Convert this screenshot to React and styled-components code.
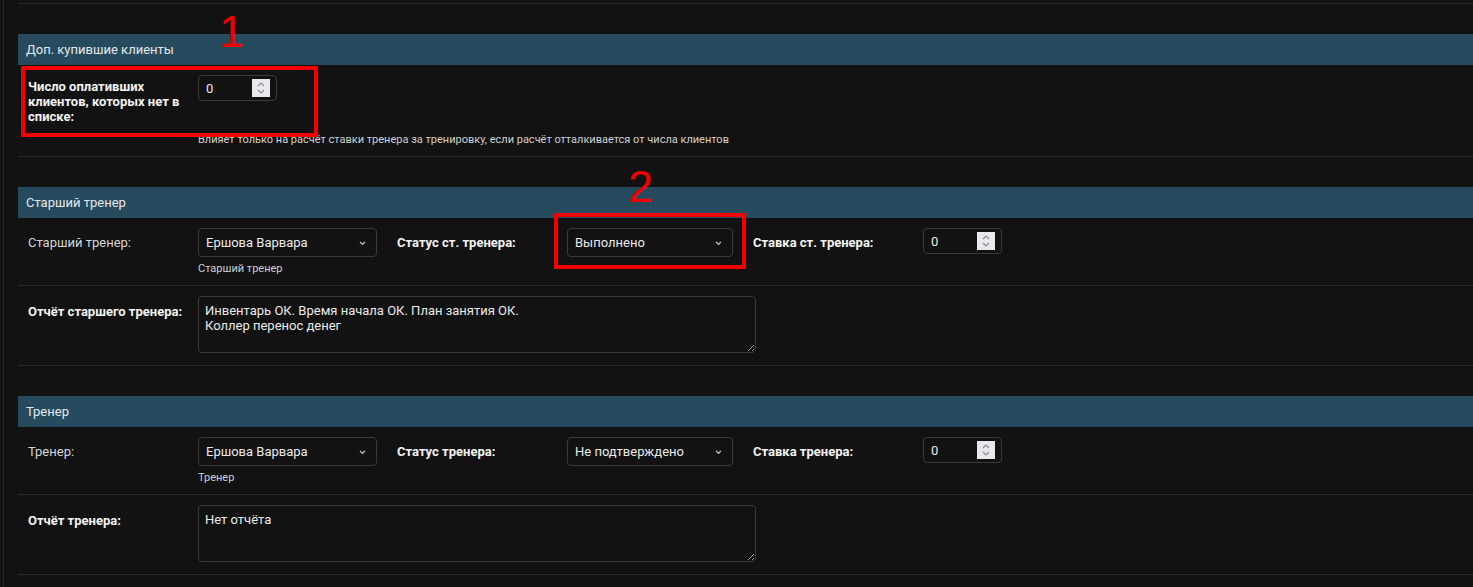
import React from 'react'
import styled, { createGlobalStyle, css } from 'styled-components'

const GlobalStyle = createGlobalStyle`
  html, body {
    margin: 0;
    background: #121212;
  }
  body {
    font-family: Roboto, "Noto Sans", sans-serif;
    color: #e6e6e6;
  }
  * { box-sizing: border-box; }
`

const Frame = styled.div`
  position: relative;
  min-height: 587px;
  margin-left: 3px;
  padding: 3px 0 0 14px;
  border-left: 1px solid #252525;
  overflow: hidden;
`

const Content = styled.div`
  border-top: 1px solid #2a2a2a;
  padding-top: 30px;
`

const Section = styled.section`
  & + & { margin-top: 30px; }
`

const SectionHeader = styled.div`
  height: 31px;
  display: flex;
  align-items: center;
  padding-left: 8px;
  background: #274b5e;
  color: #e4e8ea;
  font-size: 13px;
`

const Row = styled.div`
  display: flex;
  flex-direction: ${p => (p.$column ? 'column' : 'row')};
  align-items: flex-start;
  gap: ${p => (p.$column ? 0 : 20)}px;
  padding: 10px 0 ${p => p.$pb ?? 10}px 10px;
  border-bottom: 1px solid #2a2a2a;
`

const Group = styled.div`
  display: flex;
  align-items: flex-start;
`

const Label = styled.div`
  width: 170px;
  padding-right: 10px;
  font-size: 13px;
  color: ${p => (p.$plain ? '#d6d6d6' : '#f2f2f2')};
  font-weight: ${p => (p.$plain ? 400 : 700)};
  line-height: ${p => p.$lh || 29}px;
  padding-top: ${p => p.$pt || 0}px;
`

const Control = styled.div`
  display: flex;
  flex-direction: column;
  width: ${p => p.$w}px;
`

const boxBase = css`
  border: 1px solid #3a3a3a;
  border-radius: 4px;
  background: #121212;
  color: #eaeaea;
  font-family: Roboto, "Noto Sans", sans-serif;
  font-size: 13px;
`

const SelectBox = styled.div`
  ${boxBase}
  height: 29px;
  display: flex;
  align-items: center;
  justify-content: space-between;
  padding: 0 9px 0 7px;
`

const NumberBox = styled.div`
  ${boxBase}
  width: 79px;
  height: 26px;
  display: flex;
  align-items: center;
  justify-content: space-between;
  padding: 0 6px 0 7px;
`

const Spinner = styled.span`
  width: 18px;
  height: 18px;
  background: #e9e9ed;
  display: flex;
  align-items: center;
  justify-content: center;
`

const TextArea = styled.textarea`
  ${boxBase}
  width: 558px;
  height: 57px;
  padding: 7px 6px 3px;
  line-height: 14.5px;
  resize: both;
  color-scheme: dark;
  outline: none;
  display: block;
`

const Help = styled.div`
  font-size: 11px;
  line-height: 13px;
  color: #d0d0d0;
  margin-top: ${p => p.$mt || 5}px;
  margin-left: ${p => p.$ml || 0}px;
`

const Mark = styled.div`
  position: absolute;
  border: 4px solid #f40000;
  pointer-events: none;
`

const MarkNumber = styled.div`
  position: absolute;
  font-family: "Liberation Sans", Arial, sans-serif;
  font-size: 45px;
  line-height: 1;
  color: #f00000;
`

const Chevron = () => (
  <svg width="9" height="6" viewBox="0 0 9 6">
    <path d="M2 1.8 L4.5 4.3 L7 1.8" fill="none" stroke="#cfcfcf" strokeWidth="1.2" />
  </svg>
)

const Spin = () => (
  <Spinner>
    <svg width="10" height="14" viewBox="0 0 10 14">
      <path d="M2 5 L5 2 L8 5" fill="none" stroke="#8c8c8c" strokeWidth="1.2" />
      <path d="M2 9 L5 12 L8 9" fill="none" stroke="#8c8c8c" strokeWidth="1.2" />
    </svg>
  </Spinner>
)

const Select = ({ value, width }) => (
  <SelectBox style={{ width }}>
    <span>{value}</span>
    <Chevron />
  </SelectBox>
)

const NumberInput = ({ value }) => (
  <NumberBox>
    <span>{value}</span>
    <Spin />
  </NumberBox>
)

const TrainerSection = ({ title, trainerLabel, trainer, help, statusLabel, status, rateLabel, reportLabel, report }) => (
  <Section>
    <SectionHeader>{title}</SectionHeader>
    <Row $pb={10}>
      <Group>
        <Label $plain>{trainerLabel}</Label>
        <Control $w={179}>
          <Select value={trainer} width={179} />
          <Help>{help}</Help>
        </Control>
      </Group>
      <Group>
        <Label>{statusLabel}</Label>
        <Control $w={166}>
          <Select value={status} width={166} />
        </Control>
      </Group>
      <Group>
        <Label>{rateLabel}</Label>
        <NumberInput value="0" />
      </Group>
    </Row>
    <Row $pb={12}>
      <Group>
        <Label $lh={32}>{reportLabel}</Label>
        <TextArea readOnly defaultValue={report} />
      </Group>
    </Row>
  </Section>
)

export default function App() {
  return (
    <>
      <GlobalStyle />
      <Frame>
        <Content>
          <Section>
            <SectionHeader>Доп. купившие клиенты</SectionHeader>
            <Row $column $pb={10}>
              <Group>
                <Label $lh={15} $pt={4}>Число оплативших клиентов, которых нет в списке:</Label>
                <NumberInput value="0" />
              </Group>
              <Help $ml={170} $mt={9}>
                Влияет только на расчёт ставки тренера за тренировку, если расчёт отталкивается от числа клиентов
              </Help>
            </Row>
          </Section>

          <TrainerSection
            title="Старший тренер"
            trainerLabel="Старший тренер:"
            trainer="Ершова Варвара"
            help="Старший тренер"
            statusLabel="Статус ст. тренера:"
            status="Выполнено"
            rateLabel="Ставка ст. тренера:"
            reportLabel="Отчёт старшего тренера:"
            report={'Инвентарь ОК. Время начала ОК. План занятия ОК.\nКоллер перенос денег'}
          />

          <TrainerSection
            title="Тренер"
            trainerLabel="Тренер:"
            trainer="Ершова Варвара"
            help="Тренер"
            statusLabel="Статус тренера:"
            status="Не подтверждено"
            rateLabel="Ставка тренера:"
            reportLabel="Отчёт тренера:"
            report="Нет отчёта"
          />
        </Content>

        <Mark style={{ left: 17, top: 66, width: 297, height: 71 }} />
        <MarkNumber style={{ left: 215, top: 9 }}>1</MarkNumber>
        <Mark style={{ left: 550, top: 213, width: 192, height: 56 }} />
        <MarkNumber style={{ left: 624, top: 164 }}>2</MarkNumber>
      </Frame>
    </>
  )
}
